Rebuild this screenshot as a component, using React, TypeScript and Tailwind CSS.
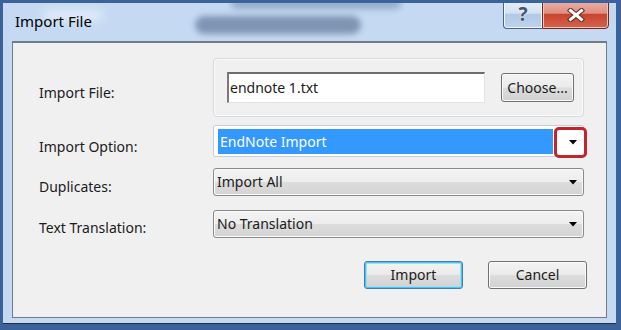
const Arrow = () => (
  <svg width="8" height="5" viewBox="0 0 8 5">
    <polygon points="0,0 8,0 4,4.5" fill="#000" />
  </svg>
);

const Select = ({ value }: { value: string }) => (
  <div className="flex h-[28px] w-[371px] items-center justify-between rounded-[3px] border border-[#8a8a8a] bg-[linear-gradient(to_bottom,#f4f4f4_0%,#ededed_48%,#dcdcdc_52%,#d4d4d4_100%)] pl-[3px] pr-[6px] shadow-[inset_0_0_0_1px_#fafafa]">
    <span>{value}</span>
    <Arrow />
  </div>
);

const Button = ({ label, focused }: { label: string; focused?: boolean }) => (
  <div
    className={
      focused
        ? 'flex h-[28px] w-[99px] items-center justify-center rounded-[3px] border border-[#3c7fb1] bg-[linear-gradient(to_bottom,#f3f3f3_0%,#ebebeb_48%,#dddddd_52%,#d1d1d1_100%)] shadow-[inset_0_0_0_1px_#4fc3f0,inset_0_0_0_2px_#9fdcf5]'
        : 'flex h-[28px] w-[99px] items-center justify-center rounded-[3px] border border-[#707070] bg-[linear-gradient(to_bottom,#f3f3f3_0%,#ebebeb_48%,#dddddd_52%,#d1d1d1_100%)] shadow-[inset_0_0_0_1px_#fbfbfb]'
    }
  >
    {label}
  </div>
);

const App = () => {
  return (
    <div className="flex h-[330px] w-[621px] flex-col overflow-hidden border-t-[3px] border-l-[3px] border-r-[5px] border-b-[6px] border-[#3c6399] bg-[#c5daf2] font-['Noto_Sans',sans-serif] text-[14px] leading-[20px] text-[#1b1b1b]">
      {/* title bar */}
      <div className="relative flex h-[38px] shrink-0 items-start justify-between pl-[12px] pr-[7px]">
        {/* blurred desktop behind the glass */}
        <div className="absolute left-[228px] top-[-4px] h-[10px] w-[170px] rounded-full bg-[#7d97bb] opacity-70 blur-[3px]" />
        <div className="absolute left-[192px] top-[13px] h-[18px] w-[166px] rounded-full bg-[#667d9e] opacity-75 blur-[3px]" />
        <div className="absolute left-[40px] top-[6px] h-[12px] w-[60px] rounded-full bg-[#e4eefa] opacity-80 blur-[4px]" />
        <span className="relative mt-[8px] text-[15px] text-black">Import File</span>
        <div className="relative -mt-[3px] flex">
          <div className="flex h-[29px] w-[39px] items-center justify-center rounded-bl-[4px] border border-r-0 border-[#4c6184] bg-[linear-gradient(to_bottom,#e3eef9_0%,#d3e2f3_45%,#b0c9e6_50%,#bdd3ec_100%)] shadow-[inset_0_0_0_1px_#f2f7fd] text-[19px] font-bold leading-none text-[#44556e] [text-shadow:0_0_2px_#fff]">
            ?
          </div>
          <div className="flex h-[29px] w-[67px] items-center justify-center rounded-br-[4px] border border-[#6b2a24] bg-[linear-gradient(to_bottom,#eab0a4_0%,#df8f7f_45%,#c8452f_50%,#d4634c_100%)] shadow-[inset_0_0_0_1px_#f0c2b8]">
            <svg width="18" height="14" viewBox="0 0 18 14">
              <path d="M3.5 2.5 L14.5 11.5 M14.5 2.5 L3.5 11.5" stroke="#5a2a24" strokeWidth="5" strokeLinecap="square" />
              <path d="M3.5 2.5 L14.5 11.5 M14.5 2.5 L3.5 11.5" stroke="#fff" strokeWidth="3" strokeLinecap="square" />
            </svg>
          </div>
        </div>
      </div>

      {/* client panel */}
      <div className="mx-[9px] h-[277px] shrink-0 border border-t-2 border-[#6e7c8b] bg-[#f0f0f0] pl-[26px] pt-[15px]">
        {/* import file */}
        <div className="flex">
          <div className="w-[174px] pt-[25px]">Import File:</div>
          <div className="flex h-[59px] w-[371px] items-center rounded-[4px] border border-[#d3dae1] pl-[13px] shadow-[inset_0_0_0_1px_#fbfcfd]">
            <div className="flex h-[31px] w-[258px] items-center border-t-2 border-l-2 border-r border-b border-t-[#6d6d6d] border-l-[#7a7a7a] border-r-[#e3e3e3] border-b-[#e3e3e3] bg-white pl-[1px]">
              endnote 1.txt
            </div>
            <div className="ml-[16px] flex h-[29px] w-[73px] items-center justify-center rounded-[3px] border border-[#707070] bg-[linear-gradient(to_bottom,#f3f3f3_0%,#ebebeb_48%,#dddddd_52%,#d1d1d1_100%)] shadow-[inset_0_0_0_1px_#fbfbfb]">
              Choose...
            </div>
          </div>
        </div>

        {/* import option */}
        <div className="mt-[8px] flex">
          <div className="w-[174px] pt-[12px]">Import Option:</div>
          <div className="relative h-[32px] w-[371px] rounded-[2px] border border-[#c9ced4] bg-white pb-[2px] pl-[4px] pr-[30px] pt-[3px]">
            <div className="flex h-full items-center bg-[#3399ff] pl-[2px] text-white">EndNote Import</div>
            {/* highlight on the drop button */}
            <div className="absolute left-[340px] top-[1px] flex h-[31px] w-[33px] items-center rounded-[5px] border-[3px] border-[#c3242c] bg-white pl-[12px]">
              <Arrow />
            </div>
          </div>
        </div>

        {/* duplicates */}
        <div className="mt-[11px] flex">
          <div className="w-[174px] pt-[9px]">Duplicates:</div>
          <Select value="Import All" />
        </div>

        {/* text translation */}
        <div className="mt-[13px] flex">
          <div className="w-[174px] pt-[8px]">Text Translation:</div>
          <Select value="No Translation" />
        </div>

        {/* buttons */}
        <div className="mt-[23px] flex gap-[25px] pl-[325px]">
          <Button label="Import" focused />
          <Button label="Cancel" />
        </div>
      </div>

      <div className="mt-[5px] h-[1px] bg-[#26303c]" />
    </div>
  );
};

export default App;
